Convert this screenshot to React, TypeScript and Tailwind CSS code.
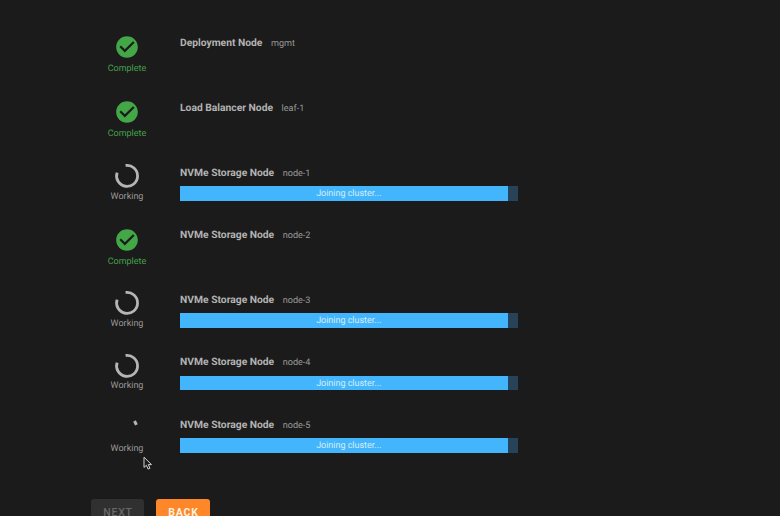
import clsx from 'clsx';

type Status = 'complete' | 'working';

interface DeployNode {
  type: string;
  name: string;
  status: Status;
  progress?: number;
  message?: string;
  spinner?: 'open' | 'start';
}

const nodes: DeployNode[] = [
  { type: 'Deployment Node', name: 'mgmt', status: 'complete' },
  { type: 'Load Balancer Node', name: 'leaf-1', status: 'complete' },
  { type: 'NVMe Storage Node', name: 'node-1', status: 'working', progress: 97.2, message: 'Joining cluster...' },
  { type: 'NVMe Storage Node', name: 'node-2', status: 'complete' },
  { type: 'NVMe Storage Node', name: 'node-3', status: 'working', progress: 97.2, message: 'Joining cluster...' },
  { type: 'NVMe Storage Node', name: 'node-4', status: 'working', progress: 97.2, message: 'Joining cluster...' },
  { type: 'NVMe Storage Node', name: 'node-5', status: 'working', progress: 97.2, message: 'Joining cluster...', spinner: 'start' },
];

function CheckCircle() {
  return (
    <svg viewBox="0 0 24 24" className="size-[26px] fill-[#43a747]">
      <path d="M12 2C6.48 2 2 6.48 2 12s4.48 10 10 10 10-4.48 10-10S17.52 2 12 2zm-2 15l-5-5 1.41-1.41L10 14.17l7.59-7.59L19 8l-9 9z" />
    </svg>
  );
}

function Spinner({ phase = 'open' }: { phase?: 'open' | 'start' }) {
  return (
    <svg viewBox="0 0 26 26" className="size-[26px] fill-none stroke-[#b5b5b5]">
      {phase === 'open' ? (
        <path d="M11.6 2.5A10.5 10.5 0 1 1 3.1 9.6" strokeWidth="2.8" />
      ) : (
        <path d="M20.5 6L22.4 9.8" strokeWidth="3" />
      )}
    </svg>
  );
}

function ProgressBar({ value, message }: { value: number; message?: string }) {
  return (
    <div className="relative mt-[3.4px] h-[14.6px] w-[337.5px] bg-[#27435a]">
      <div className="h-full bg-[#43b5fc]" style={{ width: `${value}%` }} />
      <span className="absolute inset-0 top-px text-center text-[9px] leading-[15px] tracking-[-0.02px] text-[#d5edfa]">
        {message}
      </span>
    </div>
  );
}

function NodeRow({ node }: { node: DeployNode }) {
  const complete = node.status === 'complete';
  return (
    <div className={clsx('flex', complete ? 'h-[65px]' : 'h-[62.4px]')}>
      <div className={clsx('flex w-[72px] flex-col items-center', complete ? 'pt-[2.2px]' : 'pt-[1px]')}>
        {complete ? <CheckCircle /> : <Spinner phase={node.spinner} />}
        <span
          className={clsx(
            'text-[9px] leading-[12px]',
            complete ? 'mt-[3px] text-[#43a147]' : 'mt-[1.6px] text-[#999999]',
          )}
        >
          {complete ? 'Complete' : 'Working'}
        </span>
      </div>
      <div className="ml-[17px] pt-[0.6px]">
        <div className="flex h-[20px] items-baseline leading-[20px]">
          <span className="text-[10.3px] font-bold text-[#b3b3b3]">{node.type}</span>
          <span className="ml-[8.5px] text-[9.1px] text-[#999999]">{node.name}</span>
        </div>
        {node.progress !== undefined && <ProgressBar value={node.progress} message={node.message} />}
      </div>
    </div>
  );
}

function Pointer() {
  return (
    <svg viewBox="0 0 10 15" className="absolute top-[456px] left-[143px] h-[15px] w-[10px]">
      <path
        d="M1 1.2v10.2l2.4-2.1 1.7 3.8 1.8-.8-1.6-3.7h3.2z"
        fill="#1a1a1a"
        stroke="#d2d2d2"
        strokeWidth="1"
      />
    </svg>
  );
}

export default function App() {
  return (
    <div className="relative h-[516px] w-[780px] overflow-hidden bg-[#1b1b1b] font-['Roboto',sans-serif] [text-rendering:geometricPrecision]">
      <div className="pt-[32px] pl-[91px]">
        <div className="h-[467px]">
          {nodes.map((node) => (
            <NodeRow key={node.name} node={node} />
          ))}
        </div>
        <div className="flex gap-3 text-[10.5px] leading-[26px] font-medium tracking-[0.8px]">
          <button className="h-[27px] w-[53px] rounded-[3px] bg-[#303030] pl-px text-[#686868]">NEXT</button>
          <button className="h-[27px] w-[54px] rounded-[3px] bg-[#fd8729] pl-px font-bold text-[#fff0df]">BACK</button>
        </div>
      </div>
      <Pointer />
    </div>
  );
}
